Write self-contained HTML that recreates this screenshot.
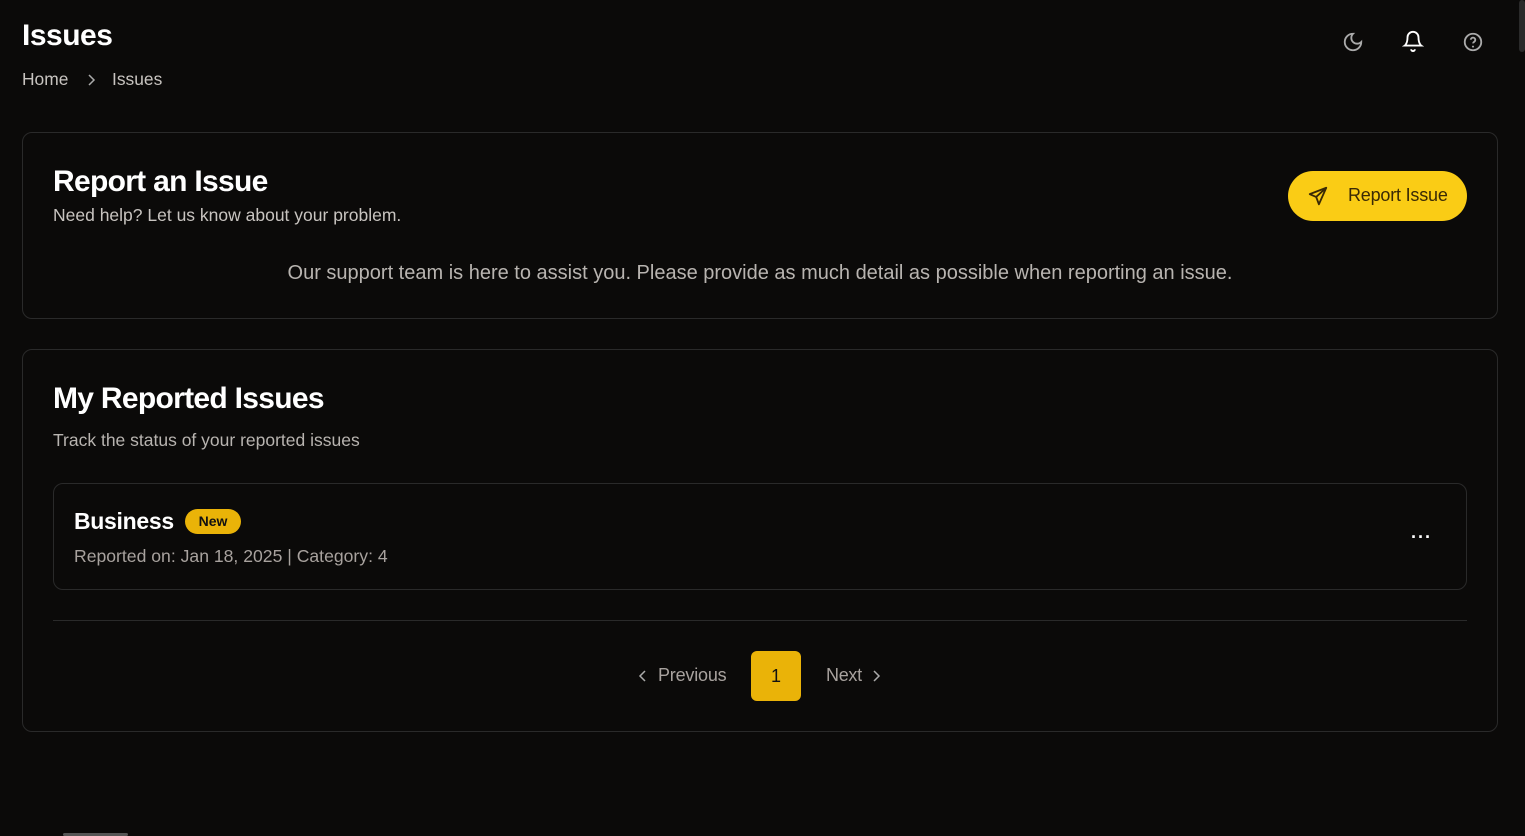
<!DOCTYPE html>
<html><head><meta charset="utf-8"><style>
*{box-sizing:border-box;margin:0;padding:0}
body{width:1525px;height:836px;background:#0b0a09;font-family:"Liberation Sans",sans-serif;color:#fff;position:relative;overflow:hidden}
.abs{position:absolute}
.card{position:absolute;border:1px solid #2a2a2a;border-radius:10px}
</style></head><body>
<div class="abs" style="left:22px;top:19px;font-size:30px;font-weight:bold;letter-spacing:-0.5px">Issues</div>
<div class="abs" style="left:22px;top:69px;font-size:17.4px;color:#c8c4c0">Home</div>
<svg class="abs" style="left:84px;top:72px" width="14" height="16" viewBox="0 0 14 16"><path d="M5 3l5 5-5 5" stroke="#aaa" stroke-width="1.5" fill="none"/></svg>
<div class="abs" style="left:112px;top:69px;font-size:17.4px;color:#c8c4c0">Issues</div>
<svg class="abs" style="left:1342px;top:31px" width="22" height="22" viewBox="0 0 24 24"><path d="M12 3a6 6 0 0 0 9 9 9 9 0 1 1-9-9z" stroke="#aaa" stroke-width="2" fill="none"/></svg>
<svg class="abs" style="left:1402px;top:30px" width="22" height="22" viewBox="0 0 24 24"><path d="M6 8a6 6 0 0 1 12 0c0 7 3 9 3 9H3s3-2 3-9M10 21a2 2 0 0 0 4 0" stroke="#fff" stroke-width="2" fill="none"/></svg>
<svg class="abs" style="left:1462px;top:31px" width="22" height="22" viewBox="0 0 24 24"><circle cx="12" cy="12" r="9" stroke="#aaa" stroke-width="2" fill="none"/><path d="M9.5 9.5a2.5 2.5 0 0 1 5 .5c0 1.7-2.5 2-2.5 3.5" stroke="#aaa" stroke-width="2" fill="none"/><circle cx="12" cy="17" r="1.1" fill="#aaa"/></svg>
<div class="abs" style="left:1519px;top:0;width:6px;height:52px;background:#2a2a2a;border-radius:3px"></div>

<div class="card" style="left:22px;top:132px;width:1476px;height:187px"></div>
<div class="abs" style="left:53px;top:165px;font-size:30px;font-weight:bold;letter-spacing:-0.7px">Report an Issue</div>
<div class="abs" style="left:53px;top:205px;font-size:17.5px;color:#c8c4c0">Need help? Let us know about your problem.</div>
<div class="abs" style="left:1288px;top:171px;width:179px;height:50px;background:#facc15;border-radius:25px;color:#3a2a05;font-size:18px;line-height:48px;padding-left:60px;letter-spacing:-0.2px">Report Issue</div>
<svg class="abs" style="left:1307px;top:185px" width="22" height="22" viewBox="0 0 24 24"><path d="M21 3L3 10l7 3 3 8zM21 3L10 13" stroke="#3a2a05" stroke-width="2" fill="none" stroke-linejoin="round"/></svg>
<div class="abs" style="left:0;width:1520px;top:262px;text-align:center;font-size:20px;color:#b8b4b0">Our support team is here to assist you. Please provide as much detail as possible when reporting an issue.</div>

<div class="card" style="left:22px;top:349px;width:1476px;height:383px"></div>
<div class="abs" style="left:53px;top:382px;font-size:30px;font-weight:bold;letter-spacing:-0.7px">My Reported Issues</div>
<div class="abs" style="left:53px;top:430px;font-size:17.5px;color:#b8b4b0">Track the status of your reported issues</div>
<div class="card" style="left:53px;top:483px;width:1414px;height:107px"></div>
<div class="abs" style="left:74px;top:508px;font-size:23px;font-weight:bold;letter-spacing:-0.3px">Business</div>
<div class="abs" style="left:185px;top:509px;width:56px;height:25px;border-radius:13px;background:#eab308;color:#111;font-size:14px;font-weight:bold;text-align:center;line-height:25px">New</div>
<div class="abs" style="left:74px;top:546px;font-size:17.6px;color:#a8a29e">Reported on: Jan 18, 2025 | Category: 4</div>
<div class="abs" style="left:1411px;top:527px;font-size:18px;font-weight:bold;letter-spacing:1px">···</div>
<div class="abs" style="left:53px;top:620px;width:1414px;height:1px;background:#2a2a2a"></div>
<svg class="abs" style="left:636px;top:668px" width="14" height="16" viewBox="0 0 14 16"><path d="M9 3L4 8l5 5" stroke="#aaa" stroke-width="1.5" fill="none"/></svg>
<div class="abs" style="left:658px;top:665px;font-size:18px;color:#a8a29e;letter-spacing:-0.2px">Previous</div>
<div class="abs" style="left:751px;top:651px;width:50px;height:50px;border-radius:6px;background:#eab308;color:#111;font-size:18px;text-align:center;line-height:50px">1</div>
<div class="abs" style="left:826px;top:665px;font-size:18px;color:#a8a29e;letter-spacing:-0.3px">Next</div>
<svg class="abs" style="left:869px;top:668px" width="14" height="16" viewBox="0 0 14 16"><path d="M5 3l5 5-5 5" stroke="#aaa" stroke-width="1.5" fill="none"/></svg>
<div class="abs" style="left:63px;top:833px;width:65px;height:3px;background:#555;border-radius:2px"></div>
</body></html>
